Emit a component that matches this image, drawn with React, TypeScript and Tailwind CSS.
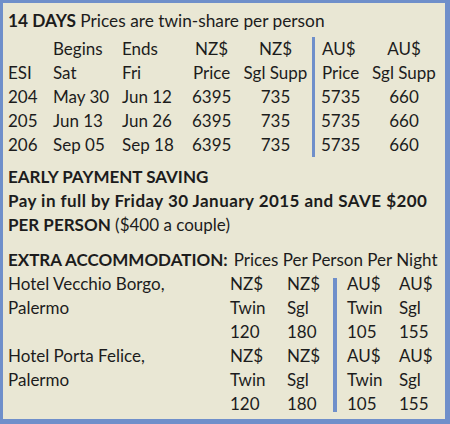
export default function App() {
  const bar = "bg-[#6f8fca]";
  return (
    <div className="w-[450px] h-[424px] bg-[#6f8fca] pl-[3px] pt-[3px] pr-[5px] pb-[5px]">
      <div
        className="h-full w-full bg-[#e9e7d4] pl-[5px] pt-[6px] text-[#1c1c1c] text-[17px] leading-[24px] whitespace-nowrap"
        style={{ fontFamily: "Lato, 'Open Sans', sans-serif" }}
      >
        <div className="text-[17.3px]">
          <span className="font-bold">14 DAYS</span> Prices are twin-share per person
        </div>

        <div className="mt-[4px] grid grid-cols-[45px_69px_70px_47px_73px_3px_55px_68px] grid-rows-[24px_24px_24px_24px_24px]">
          <div />
          <div>Begins</div>
          <div>Ends</div>
          <div className="pl-[3px]">NZ$</div>
          <div className="text-center">NZ$</div>
          <div className={`row-span-5 ${bar}`} />
          <div className="pl-[7px]">AU$</div>
          <div className="text-center">AU$</div>

          <div>ESI</div>
          <div>Sat</div>
          <div>Fri</div>
          <div className="pl-[1px]">Price</div>
          <div className="text-center">Sgl Supp</div>
          <div className="pl-[7px]">Price</div>
          <div className="text-center">Sgl Supp</div>

          {[
            ["204", "May 30", "Jun 12"],
            ["205", "Jun 13", "Jun 26"],
            ["206", "Sep 05", "Sep 18"],
          ].map(([esi, b, e]) => (
            <div key={esi} className="contents">
              <div>{esi}</div>
              <div>{b}</div>
              <div>{e}</div>
              <div>6395</div>
              <div className="text-center">735</div>
              <div className="pl-[6px]">5735</div>
              <div className="text-center">660</div>
            </div>
          ))}
        </div>

        <div className="mt-[8px]">
          <div className="font-bold">EARLY PAYMENT SAVING</div>
          <div className="font-bold tracking-[0.45px]">
            Pay in full by Friday 30 January 2015 and SAVE $200
          </div>
          <div>
            <span className="font-bold">PER PERSON</span> ($400 a couple)
          </div>
        </div>

        <div className="mt-[11px]">
          <span className="font-bold">EXTRA ACCOMMODATION:</span>
          <span className="ml-[6px]">Prices Per Person Per Night</span>
        </div>

        <div className="grid grid-cols-[222px_57px_46px_6px_60px_46px] grid-rows-[24px_24px_24px_24px_24px_24px]">
          <div className="row-span-3">
            <div>Hotel Vecchio Borgo,</div>
            <div>Palermo</div>
          </div>
          <div>NZ$</div>
          <div>NZ$</div>
          <div className={`row-span-6 w-[4px] mt-[6px] mb-[4px] ${bar}`} />
          <div className="pl-[8px]">AU$</div>
          <div>AU$</div>

          <div>Twin</div>
          <div>Sgl</div>
          <div className="pl-[8px]">Twin</div>
          <div>Sgl</div>

          <div>120</div>
          <div>180</div>
          <div className="pl-[8px]">105</div>
          <div>155</div>

          <div className="row-span-3">
            <div>Hotel Porta Felice,</div>
            <div>Palermo</div>
          </div>
          <div>NZ$</div>
          <div>NZ$</div>
          <div className="pl-[8px]">AU$</div>
          <div>AU$</div>

          <div>Twin</div>
          <div>Sgl</div>
          <div className="pl-[8px]">Twin</div>
          <div>Sgl</div>

          <div>120</div>
          <div>180</div>
          <div className="pl-[8px]">105</div>
          <div>155</div>
        </div>
      </div>
    </div>
  );
}
